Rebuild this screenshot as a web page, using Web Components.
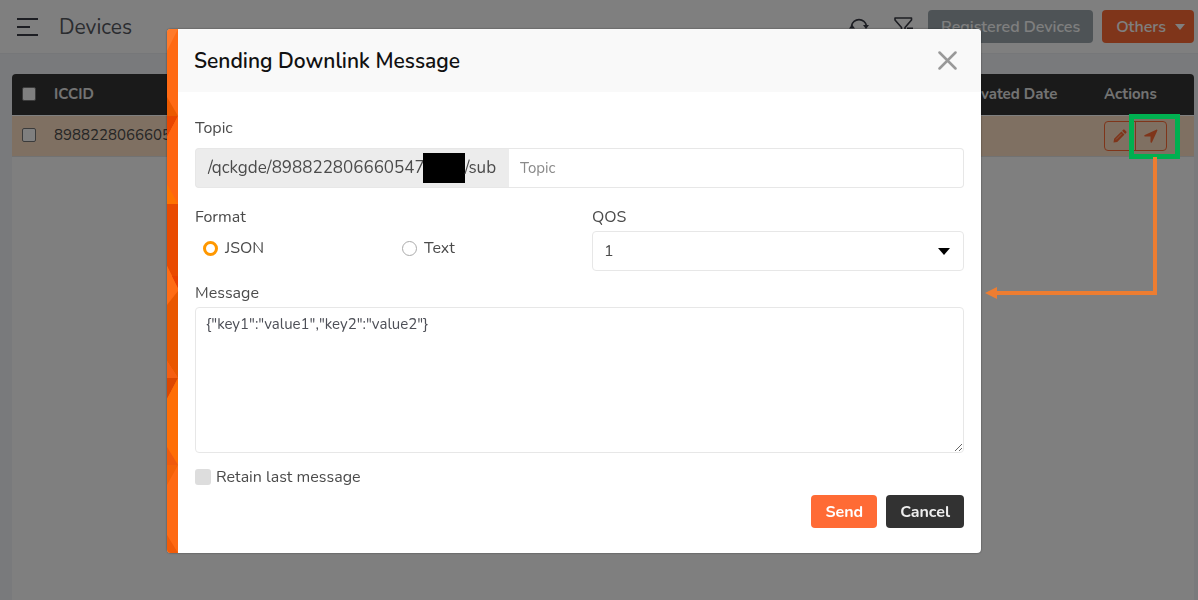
<!DOCTYPE html>
<html lang="en">
<head>
<meta charset="utf-8">
<title>Devices</title>
<style>
  html, body { height: 100%; }
  body { margin: 0; background: #f3f4f8; color: #4b4b4b; font-family: Nunito, Lato, "Open Sans", sans-serif; overflow: hidden; }
</style>
</head>
<body>
<device-page></device-page>
<script>
const define = (name, html) => customElements.define(name, class extends HTMLElement {
  constructor() {
    super();
    const t = document.createElement('template');
    t.innerHTML = html;
    this.attachShadow({ mode: 'open' }).append(t.content.cloneNode(true));
  }
});

define('page-header', `
<style>
  :host { display: flex; align-items: center; height: 54px; padding: 0 4px 0 16px; background: #fff; box-sizing: border-box; border-bottom: 1px solid #edeef2; }
  button { font: inherit; border: 0; cursor: pointer; }
  .icon { display: flex; padding: 0; background: none; color: #3a3c46; }
  h1 { margin: 0 auto 0 20px; font-size: 21px; line-height: 28px; font-weight: 400; color: #55585f; }
  .tools { display: flex; gap: 25px; margin-right: 14px; }
  .btn { height: 33px; border-radius: 4px; color: #fff; font-size: 16px; font-weight: 600; }
  .reg { padding: 0 13px; background: #9ca7ad; margin-right: 9px; color: #fff; }
  .others { display: flex; align-items: center; gap: 9px; padding: 0 9px 0 14px; background: #ff6b35; color: #fff; }
</style>
<button class="icon" aria-label="Menu"><svg width="23" height="20" fill="none" stroke="currentColor" stroke-width="2"><path d="M1 2h21M1 10h13M1 18h21"/></svg></button>
<h1><slot></slot></h1>
<div class="tools">
  <button class="icon" aria-label="Refresh"><svg width="20" height="20" viewBox="0 0 20 20" fill="none" stroke="currentColor" stroke-width="1.6"><path d="M2.5 9a7.6 7.6 0 0 1 15 0M17.500 12a7.600 7.600 0 0 1-15 0"/><path d="m14 8 3 4 3-4zM0 11.500l3-4 3 4z" fill="currentColor" stroke="none"/></svg></button>
  <button class="icon" aria-label="Clear filter"><svg width="20" height="20" viewBox="0 0 20 20" fill="none" stroke="currentColor" stroke-width="1.6" stroke-linejoin="round"><path d="M1 1h16.500v2L11 10.500V17l-3.500-2.500v-4L1 3zM13 11.200h6"/></svg></button>
</div>
<button class="btn reg">Registered Devices</button>
<button class="btn others">Others<svg width="10" height="6"><path d="M0 0h10L5 6z" fill="currentColor"/></svg></button>`);

define('device-table', `
<style>
  :host { display: block; flex: 1; margin: 20px 4px 0 12px; background: #fff; border-radius: 4px 4px 0 0; overflow: hidden; }
  table { width: 100%; border-collapse: collapse; table-layout: fixed; font-size: 15px; line-height: 20px; }
  th, td { padding: 0; text-align: left; }
  tr { height: 41px; }
  td { padding-bottom: 2px; }
  td:last-child { padding-bottom: 0; }
  thead tr { background: #343434; color: #e6e6e6; border-bottom: 1px solid #fff; }
  tbody tr { background: #ffe0c4; border-bottom: 1px solid #e4e4e4; }
  .sel { width: 42px; } .date { width: 151px; } .act { width: 90px; }
  input { appearance: none; display: block; box-sizing: border-box; width: 14px; height: 14px; margin: 0 0 0 10px; border: 1px solid #777; border-radius: 2px; background: #fff; }
  .group { display: flex; width: 63px; height: 30px; box-sizing: border-box; border: 1px solid #ff6b35; border-radius: 4px; color: #ff6b35; }
  .group button { flex: 1; display: flex; align-items: center; justify-content: center; padding: 0; border: 0; background: none; color: inherit; }
  .group button + button { border-left: 1px solid #ff6b35; }
</style>
<table>
  <thead><tr><th class="sel"><input type="checkbox" aria-label="Select all"></th><th>ICCID</th><th class="date">Activated Date</th><th class="act">Actions</th></tr></thead>
  <tbody><tr><td><input type="checkbox" aria-label="Select device"></td><td>898822806660547</td><td></td><td>
    <div class="group">
      <button aria-label="Edit"><svg width="14" height="14" viewBox="0 0 14 14" fill="currentColor"><path d="M10.200.700a1 1 0 0 1 1.400 0l1.700 1.700a1 1 0 0 1 0 1.400l-1.100 1.100-3.100-3.100zM8.400 2.500l3.100 3.100-7.300 7.300L.500 13.500l.600-3.700z"/><path d="M3 10.500 8.700 4.800" stroke="#ffe0c4" stroke-width=".7"/></svg></button>
      <button aria-label="Send message"><svg width="14" height="14" viewBox="0 0 14 14" fill="currentColor"><path d="M12.200.700.800 6C-.2 6.500.1 7.500 1 7.500h5.500V13c0 .9 1.100 1.200 1.500.2L13.300 1.800c.3-.8-.3-1.400-1.100-1.100z"/></svg></button>
    </div></td></tr></tbody>
</table>`);

define('form-field', `
<style>
  :host { display: flex; flex-direction: column; gap: var(--field-gap, 4px); min-width: 0; }
</style>
<slot></slot>`);

define('downlink-form', `
<style>
  :host { display: block; padding: 26px 17px 25px; font-size: 16px; line-height: 20px; }
  form { display: flex; flex-direction: column; }
  label, .label { color: #4b4b4b; }
  .wide { --field-gap: 10px; }
  input, select, textarea, button { font: inherit; box-sizing: border-box; }
  .topic { display: flex; height: 40px; }
  .prefix { display: flex; align-items: center; padding: 0 13px 0 12px; background: #ececec; border: 1px solid #e7e7e7; border-right: 0; border-radius: 4px 0 0 4px; font-size: 17px; box-sizing: border-box; }
  .mask { width: 42px; height: 30px; margin-left: -2px; background: #000; }
  #topic { flex: 1; min-width: 0; padding: 0 11px; border: 1px solid #e7e7e7; border-left: 0; border-radius: 0 4px 4px 0; font-size: 15px; }
  #topic::placeholder { color: #8a8a8a; }
  .cols { display: grid; grid-template-columns: 1fr 1fr; gap: 25px; margin: 19px 0 12px; }
  .radios { display: grid; grid-template-columns: 1fr 1fr; gap: 34px; padding: 7px 0 0 8px; }
  .radios label { display: flex; align-items: center; gap: 7px; }
  .radios input { appearance: none; margin: 0; width: 15px; height: 15px; border: 1px solid #aaa; border-radius: 50%; background: #fff; }
  .radios input:checked { border: 3px solid #ff9800; }
  .select { display: grid; align-items: center; }
  .select > * { grid-area: 1 / 1; }
  select { appearance: none; width: 100%; height: 40px; padding: 0 11px; border: 1px solid #e7e7e7; border-radius: 4px; background: #fff; color: #4b4b4b; }
  .select svg { justify-self: end; margin-right: 14px; pointer-events: none; }
  textarea { height: 146px; padding: 6px 10px; border: 1px solid #e7e7e7; border-radius: 4px; resize: vertical; font-size: 15px; color: #4d4f57; background: #fff; }
  .retain { display: flex; align-items: center; gap: 5px; margin: 14px 0 8px; }
  .retain input { appearance: none; margin: 0; width: 16px; height: 16px; border-radius: 3px; background: #ddd; }
  .actions { display: flex; justify-content: flex-end; gap: 9px; }
  .actions button { height: 33px; padding: 0 14px; border: 0; border-radius: 4px; color: #fff; font-size: 16px; font-weight: 700; background: #ff6b35; }
  .actions .cancel { background: #323232; color: #eee; }
</style>
<form>
  <form-field class="wide"><label for="topic">Topic</label>
    <div class="topic"><span class="prefix">/qckgde/898822806660547<span class="mask"></span>/sub</span><input id="topic" placeholder="Topic"></div></form-field>
  <div class="cols">
    <form-field><span class="label" id="fmt">Format</span>
      <div class="radios" role="radiogroup" aria-labelledby="fmt">
        <label><input type="radio" name="format" checked>JSON</label>
        <label><input type="radio" name="format">Text</label>
      </div></form-field>
    <form-field><label for="qos">QOS</label>
      <div class="select"><select id="qos"><option>1</option></select><svg width="12" height="7"><path d="M0 0h12L6 7z"/></svg></div></form-field>
  </div>
  <form-field><label for="msg">Message</label>
    <textarea id="msg" spellcheck="false">{"key1":"value1","key2":"value2"}</textarea></form-field>
  <label class="retain"><input type="checkbox">Retain last message</label>
  <div class="actions"><button type="button">Send</button><button type="button" class="cancel">Cancel</button></div>
</form>`);

define('modal-dialog', `
<style>
  :host { display: block; position: fixed; inset: 0; background: rgba(0,0,0,.5); padding: 29px 217px 0 167px; }
  section { display: flex; background: #fff; border-radius: 4px; overflow: hidden; box-shadow: 0 0 2px rgba(0,0,0,.5); }
  .strip { flex: none; width: 11px; position: relative; background: #ff6a13; }
  .strip svg { position: absolute; inset: 0; width: 100%; height: 100%; }
  .main { flex: 1; min-width: 0; }
  header { display: flex; align-items: center; justify-content: space-between; height: 63px; padding: 0 24px 0 16px; background: #f9f9f9; }
  h2 { margin: 0; font-size: 21px; line-height: 28px; font-weight: 600; color: #111; }
  header button { display: flex; padding: 0; border: 0; background: none; color: #999; }
</style>
<section role="dialog" aria-labelledby="title">
  <div class="strip"><svg viewBox="0 0 11 524" preserveAspectRatio="none">
    <path d="M0 0h11L0 22z" fill="#ff7a2a"/><path d="M0 87h11L0 108z" fill="#e84600"/><path d="M0 68l11 19H0z" fill="#ea5a00"/>
    <path d="M0 108 11 87v88H0z" fill="#ff6510"/><path d="M0 155l11 20H0z" fill="#ff7200"/>
    <path d="M0 175h11v84L0 237z" fill="#e94a00"/><path d="M0 237l11 22-11 17z" fill="#ff6c14"/><path d="M5 247l6 12v-12z" fill="#e94000"/>
    <path d="M0 276 11 262v87L0 332z" fill="#e95700"/><path d="M0 332l11 17H0z" fill="#f55e10"/>
    <path d="M0 349h11L0 370z" fill="#dc4700"/><path d="M0 370 11 349v87L0 418z" fill="#ff6e05"/>
    <path d="M0 418l11 18H0z" fill="#ef5a0c"/><path d="M0 436h11L0 456z" fill="#f36208"/><path d="M0 506l11 18H0z" fill="#f15b08"/>
  </svg></div>
  <div class="main">
    <header><h2 id="title"><slot name="title"></slot></h2>
      <button aria-label="Close"><svg width="19" height="19" stroke="currentColor" stroke-width="2.500" stroke-linecap="round"><path d="m1.500 1.500 16 16m0-16-16 16"/></svg></button></header>
    <slot></slot>
  </div>
</section>`);

define('callout-arrow', `
<style>
  :host { position: fixed; top: 114px; right: 18px; width: 195px; height: 186px; pointer-events: none; }
  svg { display: block; }
</style>
<svg width="195" height="186" fill="none"><path d="M146.500 2.500h46v40h-46z" stroke="#00b050" stroke-width="5"/><path d="M170 43v136H12" stroke="#ed7d31" stroke-width="4"/><path d="M0 179l12-6v12z" fill="#ed7d31"/></svg>`);

define('device-page', `
<style>
  :host { display: flex; flex-direction: column; min-height: 100%; }
</style>
<page-header>Devices</page-header>
<device-table></device-table>
<modal-dialog><span slot="title">Sending Downlink Message</span><downlink-form></downlink-form></modal-dialog>
<callout-arrow></callout-arrow>`);
</script>
</body>
</html>
